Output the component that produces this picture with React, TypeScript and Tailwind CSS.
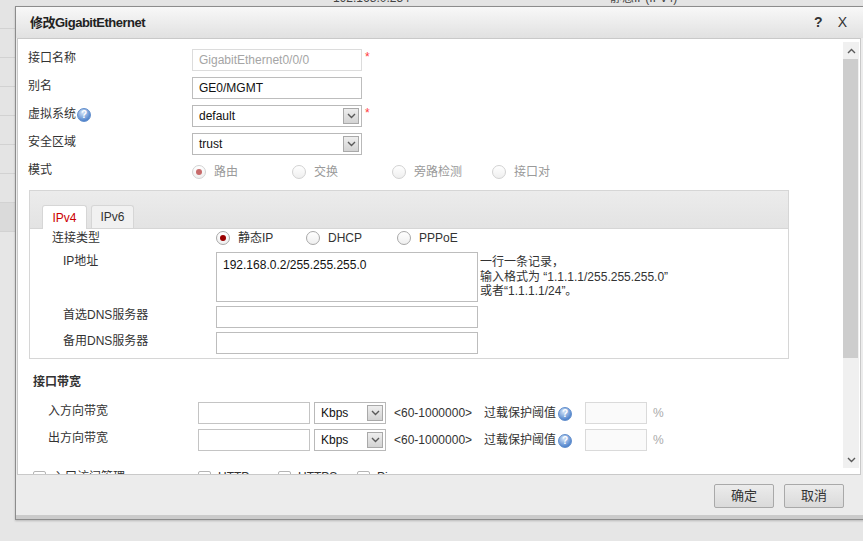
import React from "react";

const Chevron = ({ up = false }: { up?: boolean }) => (
  <svg width="9" height="6" viewBox="0 0 9 6">
    <path
      d={up ? "M1 5 L4.5 1.5 L8 5" : "M1 1 L4.5 4.5 L8 1"}
      fill="none"
      stroke="#5a5a5a"
      strokeWidth="1.4"
    />
  </svg>
);

const HelpIcon = () => (
  <span className="inline-flex h-[14px] w-[14px] items-center justify-center rounded-full border border-[#5f8dcc] bg-[radial-gradient(circle_at_40%_30%,#d6e5f8,#4f83cc_75%)] text-[10px] font-bold leading-none text-white">
    ?
  </span>
);

const Star = () => (
  <span className="ml-[3px] text-[12px] leading-[16px] text-[#ff3b3b]">*</span>
);

const Select = ({ value, w }: { value: string; w: string }) => (
  <div
    className={`flex h-[22px] items-center justify-between border border-[#b9b9b9] bg-white pl-[6px] pr-[2px] ${w}`}
  >
    <span className="text-[12px] text-[#111]">{value}</span>
    <span className="flex h-[16px] w-[16px] items-center justify-center border border-[#a9a9a9] bg-gradient-to-b from-[#eeeeee] to-[#d3d3d3]">
      <Chevron />
    </span>
  </div>
);

const Radio = ({
  label,
  checked = false,
  disabled = false,
  w,
}: {
  label: string;
  checked?: boolean;
  disabled?: boolean;
  w: string;
}) => (
  <div className={`flex items-center gap-[8px] ${w}`}>
    <span
      className={`flex h-[14px] w-[14px] items-center justify-center rounded-full border bg-gradient-to-b from-white to-[#efefef] ${
        disabled ? "border-[#d2d2d2]" : "border-[#a8a8a8]"
      }`}
    >
      {checked && (
        <span
          className={`h-[6px] w-[6px] rounded-full ${
            disabled ? "bg-[#c76a6a]" : "bg-[#9a0000]"
          }`}
        />
      )}
    </span>
    <span className={disabled ? "text-[#9a9a9a]" : "text-[#333]"}>{label}</span>
  </div>
);

const FormRow = ({
  label,
  children,
}: {
  label: React.ReactNode;
  children: React.ReactNode;
}) => (
  <div className="flex h-[28px] items-start">
    <div className="flex h-[18px] w-[164px] items-center text-[#333]">{label}</div>
    {children}
  </div>
);

const BandRow = ({ label }: { label: string }) => (
  <div className="flex h-[22px] items-start">
    <div className="w-[170px] pl-[20px] leading-[18px] text-[#333]">{label}</div>
    <div className="h-[22px] w-[112px] border border-[#c4c4c4] bg-white" />
    <div className="ml-[4px]">
      <Select value="Kbps" w="w-[72px]" />
    </div>
    <span className="ml-[8px] leading-[22px] text-[#333]">&lt;60-1000000&gt;</span>
    <span className="ml-[12px] leading-[22px] text-[#333]">过载保护阈值</span>
    <span className="ml-[2px] self-center">
      <HelpIcon />
    </span>
    <div className="ml-[13px] h-[22px] w-[62px] border border-[#dadada] bg-[#fafafa]" />
    <span className="ml-[6px] leading-[22px] text-[#aaa]">%</span>
  </div>
);

const Check = ({ label, w }: { label: string; w: string }) => (
  <div className={`flex items-center gap-[7px] ${w}`}>
    <span className="h-[13px] w-[13px] rounded-[2px] border border-[#b5b5b5] bg-white" />
    <span className="text-[#333]">{label}</span>
  </div>
);

export default function App() {
  return (
    <div className="relative h-[541px] w-[863px] overflow-hidden bg-[#e6e6e6] font-['Liberation_Sans','Noto_Sans_CJK_SC',sans-serif] text-[12px]">
      {/* page behind the dialog */}
      <div className="flex flex-col">
        {Array.from({ length: 8 }).map((_, i) => (
          <div
            key={i}
            className={`h-[29px] border-b border-[#d2d2d2] ${
              i === 7 ? "bg-[#dadada]" : "bg-[#e4e4e4]"
            }`}
          >
            {i === 0 && (
              <div className="-mt-[8px] flex leading-[12px] text-[#444]">
                <span className="ml-[333px] w-[277px]">192.168.0.254</span>
                <span>静态IP(IPv4)</span>
              </div>
            )}
          </div>
        ))}
      </div>

      {/* dialog */}
      <div className="absolute left-[15px] top-[6px] flex h-[514px] w-[850px] flex-col border border-[#8c8c8c] bg-[#ececec] shadow-[0_1px_2px_rgba(0,0,0,0.2)]">
        <div className="flex h-[31px] items-center justify-between bg-gradient-to-b from-[#f8f8f8] to-[#e1e1e1] pl-[14px] pr-[17px]">
          <span className="text-[13px] font-bold tracking-[-0.5px] text-[#222]">
            修改GigabitEthernet
          </span>
          <div className="flex items-center gap-[15px] text-[14px] text-[#333]">
            <span className="font-bold">?</span>
            <span>X</span>
          </div>
        </div>

        <div className="ml-[1px] flex h-[437px] w-[844px] border border-[#c9c9c9] bg-white">
          <div className="flex-1 overflow-hidden pl-[10px] pt-[10px]">
            <FormRow label="接口名称">
              <div className="flex h-[22px] w-[170px] items-center border border-[#dcdcdc] px-[6px] text-[#a5a5a5]">
                GigabitEthernet0/0/0
              </div>
              <Star />
            </FormRow>
            <FormRow label="别名">
              <div className="flex h-[22px] w-[170px] items-center border border-[#bdbdbd] px-[6px] text-[#111]">
                GE0/MGMT
              </div>
            </FormRow>
            <FormRow
              label={
                <>
                  虚拟系统
                  <span className="ml-[1px]">
                    <HelpIcon />
                  </span>
                </>
              }
            >
              <Select value="default" w="w-[170px]" />
              <Star />
            </FormRow>
            <FormRow label="安全区域">
              <Select value="trust" w="w-[170px]" />
            </FormRow>
            <FormRow label="模式">
              <div className="flex h-[22px] items-center">
                <Radio label="路由" checked disabled w="w-[100px]" />
                <Radio label="交换" disabled w="w-[100px]" />
                <Radio label="旁路检测" disabled w="w-[100px]" />
                <Radio label="接口对" disabled w="w-[100px]" />
              </div>
            </FormRow>

            {/* IPv4 / IPv6 panel */}
            <div className="ml-[1px] mt-[1px] w-[760px] border border-[#d6d6d6] pb-[4px]">
              <div className="flex h-[38px] items-end gap-[4px] border-b border-[#d6d6d6] bg-gradient-to-b from-[#ececec] to-[#e3e3e3] pl-[12px]">
                <div className="relative -mb-px flex h-[24px] w-[45px] items-center justify-center rounded-t-[3px] border border-b-0 border-[#d6d6d6] bg-white text-[#cc0000]">
                  IPv4
                </div>
                <div className="flex h-[23px] w-[43px] items-center justify-center rounded-t-[3px] border border-b-0 border-[#d6d6d6] bg-[#f1f1f1] text-[#333]">
                  IPv6
                </div>
              </div>
              <div className="flex h-[18px] items-center">
                <div className="w-[186px] pl-[22px] text-[#333]">连接类型</div>
                <Radio label="静态IP" checked w="w-[90px]" />
                <Radio label="DHCP" w="w-[91px]" />
                <Radio label="PPPoE" w="w-[90px]" />
              </div>
              <div className="mt-[5px] flex items-start">
                <div className="w-[186px] pl-[33px] leading-[18px] text-[#333]">IP地址</div>
                <div className="h-[50px] w-[262px] border border-[#bdbdbd] px-[6px] pt-[3px] text-[#111]">
                  192.168.0.2/255.255.255.0
                </div>
                <div className="pl-[2px] pt-[3px] leading-[14.5px] text-[#333]">
                  <div>一行一条记录，</div>
                  <div>输入格式为 “1.1.1.1/255.255.255.0”</div>
                  <div>或者“1.1.1.1/24”。</div>
                </div>
              </div>
              <div className="mt-[4px] flex items-start">
                <div className="w-[186px] pl-[33px] leading-[18px] text-[#333]">首选DNS服务器</div>
                <div className="h-[22px] w-[262px] border border-[#bdbdbd]" />
              </div>
              <div className="mt-[4px] flex items-start">
                <div className="w-[186px] pl-[33px] leading-[18px] text-[#333]">备用DNS服务器</div>
                <div className="h-[22px] w-[262px] border border-[#bdbdbd]" />
              </div>
            </div>

            <div className="mt-[14px] pl-[5px] font-bold leading-[18px] text-[#333]">
              接口带宽
            </div>
            <div className="mt-[11px]">
              <BandRow label="入方向带宽" />
            </div>
            <div className="mt-[5px]">
              <BandRow label="出方向带宽" />
            </div>
            <div className="mt-[17px] flex items-start pl-[5px]">
              <Check label="入口访问管理" w="w-[165px]" />
              <Check label="HTTP" w="w-[80px]" />
              <Check label="HTTPS" w="w-[79px]" />
              <Check label="Ping" w="w-[80px]" />
            </div>
          </div>

          {/* scrollbar */}
          <div className="mb-[6px] mr-[1px] mt-[3px] flex w-[16px] flex-col bg-[#f0f0f0]">
            <div className="flex h-[17px] items-center justify-center">
              <Chevron up />
            </div>
            <div className="h-[299px] w-[15px] bg-[#cdcdcd]" />
            <div className="flex-1" />
            <div className="flex h-[17px] items-center justify-center">
              <Chevron />
            </div>
          </div>
        </div>

        <div className="flex h-[40px] items-start justify-end gap-[10px] pr-[20px] pt-[9px]">
          <button className="h-[24px] w-[60px] rounded-[2px] border border-[#a9a9a9] bg-gradient-to-b from-[#ececec] to-[#dadada] text-[13px] text-[#333]">
            确定
          </button>
          <button className="h-[24px] w-[60px] rounded-[2px] border border-[#a9a9a9] bg-gradient-to-b from-[#ececec] to-[#dadada] text-[13px] text-[#333]">
            取消
          </button>
        </div>
        <div className="flex-1 bg-[#cbcbcb]" />
      </div>
    </div>
  );
}
